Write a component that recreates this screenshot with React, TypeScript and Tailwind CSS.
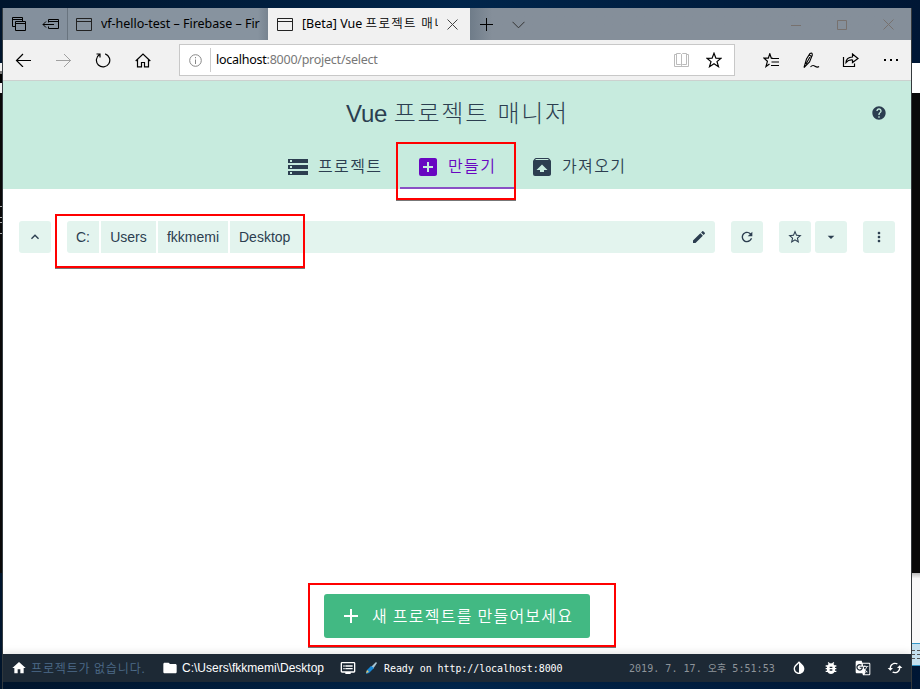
import type { ReactNode } from "react";
import {
  MdStorage, MdAddBox, MdUnarchive, MdHelp, MdKeyboardArrowUp, MdEdit, MdRefresh, MdStarBorder,
  MdArrowDropDown, MdMoreVert, MdAdd, MdHome, MdFolder, MdDvr, MdInvertColors, MdBugReport,
  MdGTranslate, MdCached,
} from "react-icons/md";

const Line = ({ w, h, className = "", children }: { w: number; h: number; className?: string; children: ReactNode }) => (
  <svg width={w} height={h} viewBox={`0 0 ${w} ${h}`} fill="none" stroke="currentColor" className={`shrink-0 ${className}`}>
    {children}
  </svg>
);

const PageIcon = () => (
  <Line w={16} h={13} className="text-[#222]"><path d="M.5.5h15v12H.5zM1 3.5h14" /></Line>
);

const starPath = "M8 1.2 9.9 6.1 15 6.3 11 9.6 12.5 14.7 8 11.8 3.5 14.7 5 9.6 1 6.3 6.1 6.1Z";

function TitleBar() {
  return (
    <div className="flex h-8 shrink-0 bg-[#84909d] text-black">
      <div className="flex w-16 items-center">
        <Line w={15} h={15} className="ml-[9px]">
          <path d="M3.5 9.5h-3v-9h10v4M.5 2.500h10M3.500 4.500h10v9h-10zM3.500 6.500h10" />
        </Line>
        <Line w={17} h={12} className="ml-[15px]">
          <path d="M6.500 4.500v-3h10v9h-10v-2M6.500 3.500h10M1 6.500h11M4 3.500l-3 3 3 3" />
        </Line>
      </div>
      <div className="flex w-[201px] items-center border-l border-[#69747f] bg-linear-to-r from-[#87939f] from-95% to-[#77838f] pl-2">
        <PageIcon />
        <div className="ml-[9px] w-[159px] overflow-hidden text-[12.5px] leading-8 tracking-[-0.02px] whitespace-nowrap">vf-hello-test – Firebase – Fir</div>
      </div>
      <div className="flex w-[202px] items-center bg-[#f1f1f1] pl-[9px]">
        <PageIcon />
        <div className="ml-[9px] w-[136px] overflow-hidden text-[12.5px] leading-8 whitespace-nowrap">[Beta] Vue <span className="font-[350] tracking-[1.3px]">프로젝트 매니저</span></div>
        <Line w={11} h={11} className="ml-[9px] text-[#444]"><path d="M.5.5l10 10M10.5.5l-10 10" /></Line>
      </div>
      <div className="flex grow items-center bg-linear-to-r from-[#6f7c89] to-[#858f9a] to-5% pt-px">
        <Line w={13} h={13} className="ml-[10px]"><path d="M6.5 0v13M0 6.5h13" /></Line>
        <Line w={13} h={8} className="ml-[19px] text-[#333]"><path d="M.5.8l6 6 6-6" /></Line>
        <div className="ml-auto flex w-[103px] items-center justify-between text-[#77716e]">
          <Line w={10} h={10}><path d="M0 5.5h10" /></Line>
          <Line w={10} h={10}><path d="M.5.5h9v9h-9z" /></Line>
          <Line w={11} h={11}><path d="M.5.5l10 10M10.5.5l-10 10" /></Line>
        </div>
        <div className="w-[17px]" />
      </div>
    </div>
  );
}

function Toolbar() {
  return (
    <div className="flex h-[41px] shrink-0 items-center border-b border-[#ccd1cf] bg-[#f1f1f1] text-black">
      <Line w={16} h={14} className="ml-[12px]"><path d="M1.500 7.500h15M8 1L1.500 7.500l6.500 6.500" strokeWidth="1.200" /></Line>
      <Line w={16} h={14} className="ml-[24px] text-[#a0a0a0]"><path d="M1 7.500h15M9 1L15.500 7.500l-6.500 6.500" /></Line>
      <Line w={16} h={16} className="ml-[24px]"><path d="M10.200 1.900A6.700 6.700 0 1 1 4.500 2.600M1.500 2h3.500v3.600" strokeWidth="1.200" /></Line>
      <Line w={16} h={15} className="ml-[24px]"><path d="M.7 8L8 1l7.300 7M2.500 6.500v7.300h4V9.500h3v4.300h4V6.500" strokeWidth="1.200" /></Line>
      <div className="ml-[28px] flex h-8 w-[556px] items-center border border-[#c8c8c8] bg-white">
        <Line w={13} h={13} className="ml-[9px] text-[#888]"><circle cx="6.500" cy="6.500" r="5.800" /><path d="M6.500 5.500v4.500M6.500 3v1.300" /></Line>
        <div className="ml-[8px] h-6 w-px bg-[#ccc]" />
        <div className="ml-[5px] text-[12.5px] tracking-[-0.25px] whitespace-nowrap text-[#777]"><span className="text-black">localhost</span>:8000/project/select</div>
        <Line w={15} h={14} className="ml-auto text-[#bbb]"><path d="M2.500 1.500h-2v12h14v-12h-2M2.500.5h4l1 1 1-1h4v11h-4l-1 1-1-1h-4zM7.500 1.500v11" /></Line>
        <Line w={16} h={16} className="mr-[12px] ml-[17px]"><path d={starPath} strokeWidth="1.200" /></Line>
      </div>
      <Line w={17} h={15} className="ml-[28px]"><path d="M9.500 5.200H8.300L6.800.8 5.300 5.200H1L4.400 8.300 3 13.500 6.500 11M8.500 5.500H16M8.500 9h7.500M8 12.500h8" strokeWidth="1.200" /></Line>
      <Line w={17} h={17} className="ml-[23px]"><path d="M1 15.500L3.500 7 7 1.500Q9.500.2 9.300 3.200L6.500 10 1 15.500ZM6.300 3l2.200 1.500M3 12L7.800 3.500M7.500 15q2-2.500 4.500-.8t4 .3" strokeWidth="1.100" /></Line>
      <Line w={17} h={15} className="ml-[22px]"><path d="M1.500 4v9.500h11v-3M4 9.500Q4 4.500 10.500 4V1l5.500 4.500L10.500 9.500V7Q6.500 6.500 4 9.500Z" strokeWidth="1.200" /></Line>
      <div className="ml-[25px] flex gap-[4px]">
        <i className="size-[2px] bg-black" /><i className="size-[2px] bg-black" /><i className="size-[2px] bg-black" />
      </div>
    </div>
  );
}

function Header() {
  return (
    <header className="flex h-[108px] shrink-0 flex-col bg-[#c7ebde]">
      <div className="flex h-16 items-center">
        <div className="w-[343px]" />
        <h1 className="w-[240px] pt-[2px] font-['Liberation_Sans','Noto_Sans_CJK_KR',sans-serif] text-[24px] font-light whitespace-nowrap"><span className="tracking-[-0.2px]">Vue </span><span className="tracking-[1.75px]">프로젝트 매니저</span></h1>
        <MdHelp className="ml-auto size-4 mr-[24px]" />
      </div>
      <nav className="flex h-11 font-['Liberation_Sans','Noto_Sans_CJK_KR',sans-serif] text-[16px] font-[350] tracking-[1.4px]">
        <div className="ml-[267px] flex w-[130px] items-center pl-[16px]">
          <MdStorage className="size-6" /><span className="ml-[8px] whitespace-nowrap">프로젝트</span>
        </div>
        <div className="flex w-[115px] items-center border-b-2 border-[#8a4fc5] pt-[2px] pl-[16px] text-[#6806c1]">
          <MdAddBox className="size-6" /><span className="ml-[8px] whitespace-nowrap">만들기</span>
        </div>
        <div className="flex items-center pl-[15px]">
          <MdUnarchive className="size-6" /><span className="ml-[8px] whitespace-nowrap">가져오기</span>
        </div>
      </nav>
    </header>
  );
}

const Box = ({ className = "", children }: { className?: string; children: ReactNode }) => (
  <button className={`flex size-8 shrink-0 items-center justify-center rounded-[3px] bg-[#e3f4ee] ${className}`}>{children}</button>
);

function PathBar() {
  return (
    <div className="mt-8 flex px-4 text-[14px]">
      <Box><MdKeyboardArrowUp className="size-4" /></Box>
      <div className="ml-4 flex h-8 w-[648px] gap-[2px] overflow-hidden rounded-[3px] font-['Liberation_Sans',Arial,sans-serif] leading-8 *:bg-[#e3f4ee]">
        <div className="w-8 text-center">C:</div>
        <div className="w-[55px] text-center">Users</div>
        <div className="w-[70px] text-center">fkkmemi</div>
        <div className="flex grow items-center justify-between pr-2 pl-[9px]">Desktop<MdEdit className="size-4" /></div>
      </div>
      <Box className="ml-4"><MdRefresh className="size-4" /></Box>
      <Box className="ml-4"><MdStarBorder className="size-4" /></Box>
      <Box className="ml-1"><MdArrowDropDown className="size-4" /></Box>
      <Box className="ml-4"><MdMoreVert className="size-4" /></Box>
    </div>
  );
}

function StatusBar() {
  return (
    <footer className="flex h-7 shrink-0 items-center bg-[#1d2935] text-[12px] whitespace-nowrap text-white shadow-[0_-1px_8px_rgba(0,0,0,0.12)]">
      <MdHome className="ml-2 size-4" />
      <div className="ml-1 w-[131px] font-['Noto_Sans_CJK_KR',sans-serif] font-[350] tracking-[0.85px] text-[#4d6c8a]">프로젝트가 없습니다.</div>
      <MdFolder className="size-4" />
      <div className="ml-[4px] w-[158px] font-['Liberation_Sans',Arial,sans-serif]">C:\Users\fkkmemi\Desktop</div>
      <MdDvr className="size-4" />
      <svg className="ml-[9px] size-3" viewBox="0 0 12 12">
        <path d="M11 0l1 1-4 6-2-2z" fill="#a8c4d2" />
        <path d="M6 4l3 2-5 5-3 1 1-4z" fill="#1688d8" /><path d="M2 8l2 2-3 1z" fill="#e7c66b" />
      </svg>
      <div className="ml-[7px] font-['DejaVu_Sans_Mono',monospace] text-[10px] tracking-[-0.07px]">Ready on http://localhost:8000</div>
      <div className="ml-auto w-[162px] font-['DejaVu_Sans_Mono','Noto_Sans_CJK_KR',monospace] text-[10px] tracking-[0.04px] text-[#8e949a]">2019. 7. 17. 오후 5:51:53</div>
      <div className="flex gap-4 pr-2">
        <MdInvertColors className="size-4" /><MdBugReport className="size-4" /><MdGTranslate className="size-4" /><MdCached className="size-4" />
      </div>
    </footer>
  );
}

const Mark = ({ className }: { className: string }) => (
  <div className={`pointer-events-none absolute border-2 border-[#f00] shadow-[0_1px_0_#777] ${className}`} />
);

export default function App() {
  return (
    <div className="relative flex h-[689px] w-[920px] overflow-hidden bg-linear-to-r from-[#00152d] via-[#00254b] to-[#001735] pt-2 font-['Noto_Sans','Noto_Sans_CJK_KR',sans-serif] text-[#2c3e50]">
      <div className="flex w-[3px] shrink-0 flex-col border-r border-[#333b40] pt-[55px]">
        <div className="h-[8px] bg-[#f1f1f1]" />
        <div className="h-[3px] bg-[#777]" />
        <div className="h-[9px] bg-black" />
        <div className="h-[10px] bg-[#f1f1f1]" />
        <div className="flex h-[480px] flex-col bg-[#090909] pt-[113px]">
          <i className="h-px bg-[#aaa]" /><i className="mt-[10px] h-px bg-[#aaa]" /><i className="mt-1 h-px bg-[#aaa]" /><i className="mt-[10px] h-px bg-[#aaa]" />
        </div>
      </div>
      <div className="flex h-[674px] w-[908px] shrink-0 flex-col bg-white">
        <TitleBar />
        <Toolbar />
        <Header />
        <main className="flex min-h-0 grow flex-col">
          <PathBar />
          <button className="mt-auto mb-4 ml-[321px] flex h-11 w-[266px] items-center rounded-[3px] bg-[#42b983] pl-[15px] font-['Noto_Sans_CJK_KR',sans-serif] text-[16px] font-[350] tracking-[1.25px] whitespace-nowrap text-white">
            <MdAdd className="mr-[9px] size-6" /><span className="pb-[3px]">새 프로젝트를 만들어보세요</span>
          </button>
        </main>
        <StatusBar />
      </div>
      <div className="flex grow flex-col border-l border-[#34393c] pt-[55px]">
        <div className="h-[30px] bg-white" />
        <div className="h-[480px] bg-[#090909]" />
        <div className="h-[70px] bg-linear-to-b from-[#bbb] to-[#f8f8f8] to-8%" />
        <div className="flex h-[23px] flex-col gap-[3px] border-y border-[#3498c9] bg-[#c5e0ee] pt-[6px]">
          <i className="h-px border-t border-dashed border-[#555]" /><i className="h-px border-t border-dashed border-[#555]" /><i className="h-px border-t border-dashed border-[#555]" />
        </div>
      </div>
      <Mark className="top-[142px] left-[396px] h-[58px] w-[120px]" />
      <Mark className="top-[214px] left-[55px] h-[54px] w-[250px]" />
      <Mark className="top-[583px] left-[308px] h-[64px] w-[308px]" />
    </div>
  );
}
